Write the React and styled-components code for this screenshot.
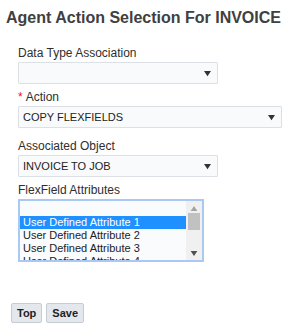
import React from 'react';
import styled, { createGlobalStyle } from 'styled-components';

const GlobalStyle = createGlobalStyle`
    body {
        margin: 0;
        background: #ffffff;
        font-family: "Liberation Sans", Arial, sans-serif;
    }
`;

const Page = styled.div`
    display: flex;
    flex-direction: column;
    padding: 8px 0 0 6px;
`;

const Title = styled.h1`
    margin: 0;
    font-size: 16px;
    line-height: 19px;
    font-weight: bold;
    color: #404040;
`;

const Form = styled.div`
    display: flex;
    flex-direction: column;
    padding: 19px 0 0 12px;
`;

const Field = styled.div`
    display: flex;
    flex-direction: column;
    gap: 2px;
    margin-bottom: ${({ $spaceAfter }) => `${$spaceAfter}px`};
`;

const Label = styled.label`
    font-size: 12px;
    line-height: 14px;
    color: #2e2e2e;
`;

const Required = styled.span`
    color: #e01b1b;
    margin-right: 3px;
`;

const SelectBox = styled.div`
    box-sizing: border-box;
    width: ${({ $width }) => `${$width}px`};
    height: 22px;
    display: flex;
    align-items: center;
    justify-content: space-between;
    padding: 0 6px 0 4px;
    background: #f8fafc;
    border: 1px solid #dcdfe3;
    border-radius: 1px;
    font-size: 11px;
    color: #222222;
`;

// small filled triangle used by the drop downs and the scrollbar
const Triangle = ({ up = false, color = '#333', width = 7, height = 7 }) => (
    <svg width={width} height={height} viewBox="0 0 8 6">
        <path d={up ? 'M0 6 L8 6 L4 0 Z' : 'M0 0 L8 0 L4 6 Z'} fill={color} />
    </svg>
);

const ListBox = styled.div`
    box-sizing: border-box;
    width: 186px;
    height: 63px;
    display: flex;
    background: #f9fbfd;
    border: 2px solid #a9c8f4;
    overflow: hidden;
`;

const Options = styled.div`
    flex: 1;
    display: flex;
    flex-direction: column;
`;

const Option = styled.div`
    flex: none;
    height: ${({ $blank }) => ($blank ? '15px' : '13px')};
    line-height: 13px;
    padding-left: 3px;
    font-size: 11px;
    white-space: nowrap;
    color: ${({ $selected }) => ($selected ? '#ffffff' : '#222222')};
    background: ${({ $selected }) => ($selected ? '#1e90ff' : 'transparent')};
`;

const Scrollbar = styled.div`
    width: 16px;
    display: flex;
    flex-direction: column;
    align-items: center;
    justify-content: space-between;
    background: #f0f0f0;
    padding: 5px 0 4px;
`;

const Track = styled.div`
    display: flex;
    flex-direction: column;
    align-items: center;
`;

const Thumb = styled.div`
    width: 12px;
    height: 17px;
    background: #c1c1c1;
    margin-top: 2px;
`;

const Buttons = styled.div`
    display: flex;
    gap: 4px;
    padding: 41px 0 0 5px;
`;

const Button = styled.button`
    height: 20px;
    padding: 0 5px;
    font-family: "Liberation Sans", Arial, sans-serif;
    font-size: 11px;
    font-weight: bold;
    color: #222222;
    background: #e4e8ec;
    border: 1px solid #c5ccd3;
    border-radius: 2px;
`;

const options = [
    '',
    'User Defined Attribute 1',
    'User Defined Attribute 2',
    'User Defined Attribute 3',
    'User Defined Attribute 4',
];

const App = () => (
    <Page>
        <GlobalStyle />
        <Title>Agent Action Selection For INVOICE</Title>
        <Form>
            <Field $spaceAfter={6}>
                <Label>Data Type Association</Label>
                <SelectBox $width={200}>
                    <span />
                    <Triangle />
                </SelectBox>
            </Field>
            <Field $spaceAfter={11}>
                <Label><Required>*</Required>Action</Label>
                <SelectBox $width={264}>
                    <span>COPY FLEXFIELDS</span>
                    <Triangle />
                </SelectBox>
            </Field>
            <Field $spaceAfter={6}>
                <Label>Associated Object</Label>
                <SelectBox $width={200}>
                    <span>INVOICE TO JOB</span>
                    <Triangle />
                </SelectBox>
            </Field>
            <Field $spaceAfter={0}>
                <Label>FlexField Attributes</Label>
                <ListBox>
                    <Options>
                        {options.map((text, i) => (
                            <Option key={i} $blank={text === ''} $selected={i === 1}>
                                {text}
                            </Option>
                        ))}
                    </Options>
                    <Scrollbar>
                        <Track>
                            <Triangle up color="#a3a3a3" width={8} height={5} />
                            <Thumb />
                        </Track>
                        <Triangle color="#505050" width={8} height={5} />
                    </Scrollbar>
                </ListBox>
            </Field>
        </Form>
        <Buttons>
            <Button>Top</Button>
            <Button>Save</Button>
        </Buttons>
    </Page>
);

export default App;
